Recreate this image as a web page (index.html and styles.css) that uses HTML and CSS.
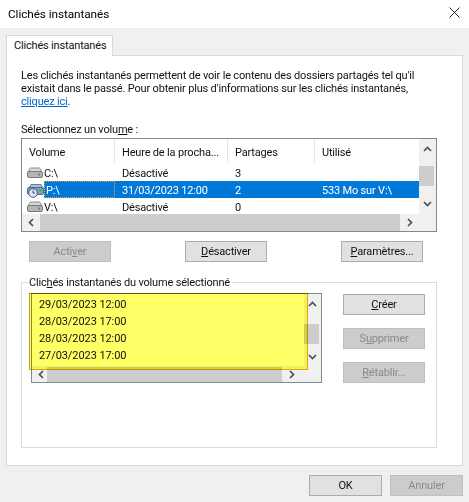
FILE: index.html
```html
<!DOCTYPE html>
<html lang="fr">
<head>
<meta charset="utf-8">
<title>Clichés instantanés</title>
<link rel="stylesheet" href="styles.css">
</head>
<body>
<svg class="defs" width="0" height="0" aria-hidden="true">
  <defs>
    <symbol id="up" viewBox="0 0 9 6"><path d="M1 5 L4.5 1.5 L8 5" fill="none" stroke="#505050" stroke-width="1.7"/></symbol>
    <symbol id="down" viewBox="0 0 9 6"><path d="M1 1 L4.5 4.5 L8 1" fill="none" stroke="#505050" stroke-width="1.7"/></symbol>
    <symbol id="left" viewBox="0 0 6 9"><path d="M5 1 L1.5 4.5 L5 8" fill="none" stroke="#505050" stroke-width="1.7"/></symbol>
    <symbol id="right" viewBox="0 0 6 9"><path d="M1 1 L4.5 4.5 L1 8" fill="none" stroke="#505050" stroke-width="1.7"/></symbol>
    <symbol id="drive" viewBox="0 0 16 11">
      <path d="M1 5 L3 1.5 Q3.4 1 4 1 H12 Q12.6 1 13 1.5 L15 5 Z" fill="#d8d8d8" stroke="#8a8a8a"/>
      <rect x="0.5" y="4.5" width="15" height="6" rx="1.5" fill="#b4b4b4" stroke="#7a7a7a"/>
      <rect x="11" y="6.5" width="2" height="2" fill="#3fae3f"/>
    </symbol>
  </defs>
</svg>
<header class="titlebar">
  <span class="title">Clichés instantanés</span>
  <svg class="close" viewBox="0 0 11 11" width="11" height="11"><path d="M0.5 0.5 L10.5 10.5 M10.5 0.5 L0.5 10.5" stroke="#222" stroke-width="1" fill="none"/></svg>
</header>
<nav class="tabs"><div class="tab">Clichés instantanés</div></nav>
<main class="panel">
  <p class="intro">Les clichés instantanés permettent de voir le contenu des dossiers partagés tel qu'il<br>existait dans le passé. Pour obtenir plus d'informations sur les clichés instantanés,<br><a class="link" href="#">cliquez ici</a>.</p>
  <label class="vol-label">Sélectionnez un volu<u>m</u>e :</label>
  <section class="listview">
    <div class="lv-main">
      <div class="lv-content">
        <div class="lv-head">
          <span class="col">Volume</span><span class="col">Heure de la procha...</span><span class="col">Partages</span><span class="col">Utilisé</span>
        </div>
        <div class="lv-row">
          <span class="cell-vol"><svg class="drive"><use href="#drive"/></svg><span>C:\</span></span><span>Désactivé</span><span>3</span><span></span>
        </div>
        <div class="lv-row selected">
          <span class="cell-vol"><svg class="drive-clock" viewBox="0 0 17 15" width="17" height="15">
            <path d="M2 5 L4 1.5 H14 L16 5 Z" fill="#a9bfd6" stroke="#5f7f9f"/>
            <rect x="0.5" y="4.5" width="16" height="7" rx="1.5" fill="#7f9cbd" stroke="#4f6f92"/>
            <rect x="12.500" y="7" width="2" height="2" fill="#4ab04a"/>
            <circle cx="6" cy="10" r="4.300" fill="#dfe8f2" stroke="#3f5f82"/>
            <path d="M6 7.500 V10 H8" fill="none" stroke="#2f4f72"/>
          </svg><span class="sel-text">P:\</span></span><span>31/03/2023 12:00</span><span>2</span><span>533 Mo sur V:\</span>
        </div>
        <div class="lv-row clip">
          <span class="cell-vol"><svg class="drive"><use href="#drive"/></svg><span>V:\</span></span><span>Désactivé</span><span>0</span><span></span>
        </div>
      </div>
      <div class="vscroll">
        <svg class="chev-v"><use href="#up"/></svg>
        <div class="vtrack top1"><div class="vthumb"></div></div>
        <svg class="chev-v"><use href="#down"/></svg>
      </div>
    </div>
    <div class="hscroll">
      <svg class="chev-h"><use href="#left"/></svg>
      <div class="hthumb"></div>
      <svg class="chev-h"><use href="#right"/></svg>
    </div>
  </section>
  <div class="vol-actions">
    <button class="btn" disabled>Acti<u>v</u>er</button>
    <button class="btn"><u>D</u>ésactiver</button>
    <button class="btn"><u>P</u>aramètres...</button>
  </div>
  <fieldset class="group">
    <legend class="group-title">Clic<u>h</u>és instantanés du volume sélectionné</legend>
    <div class="group-body">
      <div class="snaplist">
        <div class="snap-main">
          <ul class="snaps">
            <li>29/03/2023 12:00</li>
            <li>28/03/2023 17:00</li>
            <li>28/03/2023 12:00</li>
            <li>27/03/2023 17:00</li>
          </ul>
          <div class="vscroll small">
            <svg class="chev-v"><use href="#up"/></svg>
            <div class="vtrack top2"><div class="vthumb"></div></div>
            <svg class="chev-v"><use href="#down"/></svg>
          </div>
        </div>
        <div class="hscroll small">
          <svg class="chev-h"><use href="#left"/></svg>
          <div class="hthumb"></div>
          <svg class="chev-h"><use href="#right"/></svg>
        </div>
      </div>
      <div class="snap-actions">
        <button class="btn"><u>C</u>réer</button>
        <button class="btn" disabled>S<u>u</u>pprimer</button>
        <button class="btn" disabled><u>R</u>établir...</button>
      </div>
    </div>
  </fieldset>
</main>
<footer class="footer">
  <button class="btn wide">OK</button>
  <button class="btn wide" disabled>Annuler</button>
</footer>
<div class="highlight"></div>
</body>
</html>
```
FILE: styles.css
```css
* { box-sizing: border-box; }
html, body { margin: 0; padding: 0; }
body {
  width: 469px;
  height: 502px;
  position: relative;
  overflow: hidden;
  background: #f0f0f0;
  color: #111;
  font-family: Roboto, "Liberation Sans", sans-serif;
  font-size: 11px;
  letter-spacing: -0.18px;
  line-height: 13px;
}
.defs { position: absolute; }
u { text-underline-offset: 1px; text-decoration-thickness: 1px; }

.titlebar {
  height: 28px;
  background: #fff;
  display: flex;
  align-items: center;
  justify-content: space-between;
  padding: 0 9px 0 8px;
}
.title { font-size: 11.8px; letter-spacing: -0.08px; color: #000; }
.close { display: block; margin-bottom: 4px; }

.tabs { height: 27px; padding: 7px 0 0 6px; }
.tab {
  width: 107px;
  height: 21px;
  background: #fff;
  border: 1px solid #d9d9d9;
  border-bottom: none;
  padding: 3px 0 0 7px;
  position: relative;
  z-index: 1;
  white-space: nowrap;
}
.panel {
  width: 457px;
  height: 411px;
  margin-left: 6px;
  background: #fff;
  border: 1px solid #d9d9d9;
  padding: 13px 0 0 14px;
}
.intro { margin: 0; width: 430px; white-space: nowrap; }
.link { color: #0066cc; }
.vol-label { display: block; margin-top: 15px; height: 15px; }

.listview {
  width: 416px;
  height: 94px;
  border: 1px solid #828790;
  display: flex;
  flex-direction: column;
}
.lv-main { display: flex; height: 75px; }
.lv-content { width: 397px; overflow: hidden; }
.lv-head, .lv-row {
  display: grid;
  grid-template-columns: 93px 113px 87px 1fr;
  white-space: nowrap;
}
.lv-head { height: 25px; }
.col {
  height: 24px;
  padding: 7px 0 0 7px;
  border-right: 1px solid #e5e5e5;
}
.col:last-child { border-right: none; }
.lv-row { height: 17px; line-height: 15px; }
.lv-row > span { padding: 2px 0 0 7px; }
.lv-row > .cell-vol { padding: 0 0 0 5px; display: flex; align-items: center; }
.drive { width: 16px; height: 11px; margin-right: 1px; flex: none; }
.drive-clock { flex: none; margin-top: 2px; }
.cell-vol > span { padding-top: 2px; }
.selected > span { background: #0078d7; color: #fff; }
.selected > .cell-vol { background: none; color: #111; }
.sel-text {
  background: #0078d7;
  color: #fff;
  flex: 1;
  height: 17px;
  padding-left: 2px;
  outline: 1px dotted #e8a33c;
  outline-offset: -1px;
}
.clip { height: 16px; overflow: hidden; }

.vscroll {
  width: 17px;
  background: #f0f0f0;
  display: flex;
  flex-direction: column;
  align-items: center;
  justify-content: space-between;
  padding: 7px 0 7px;
}
.chev-v { width: 9px; height: 6px; display: block; flex: none; }
.vtrack { flex: 1; width: 100%; }
.top1 { padding-top: 14px; }
.top2 { padding-top: 17px; }
.vthumb { width: 15px; height: 20px; background: #cdcdcd; }
.hscroll {
  height: 17px;
  background: #f0f0f0;
  display: flex;
  align-items: center;
  padding-left: 6px;
}
.chev-h { width: 6px; height: 9px; flex: none; display: block; }
.hthumb { width: 360px; height: 17px; background: #cdcdcd; margin: 0 7px 0 6px; }

.vol-actions {
  display: flex;
  justify-content: space-between;
  width: 394px;
  margin: 9px 0 0 8px;
}
.btn {
  width: 82px;
  height: 21px;
  padding: 0;
  border: 1px solid #adadad;
  background: #e1e1e1;
  color: #111;
  font: inherit;
  letter-spacing: inherit;
  line-height: 17px;
}
.btn:disabled { background: #cccccc; border-color: #bfbfbf; color: #8a8a8a; }

.group {
  width: 416px;
  height: 172px;
  margin: 14px 0 0;
  padding: 0;
  border: 1px solid #dcdcdc;
  min-width: 0;
}
.group-title { margin-left: 6px; padding: 0 1px; line-height: 13px; }
.group-body { display: flex; align-items: flex-start; padding: 4px 0 0 9px; }
.snaplist {
  width: 291px;
  height: 90px;
  border: 1px solid #828790;
  display: flex;
  flex-direction: column;
}
.snap-main { display: flex; height: 72px; }
.snaps { list-style: none; margin: 0; padding: 2px 0 0 7px; flex: 1; letter-spacing: -0.08px; }
.snaps li { height: 17px; line-height: 17px; }
.vscroll.small { width: 17px; padding: 7px 0 6px; }
.hscroll.small { height: 16px; padding-left: 6px; }
.hscroll.small .hthumb { width: 235px; height: 15px; margin: 0 7px 0 3px; }
.snap-actions {
  display: flex;
  flex-direction: column;
  gap: 13px;
  margin-left: 21px;
  padding-top: 1px;
}

.footer {
  display: flex;
  justify-content: flex-end;
  gap: 8px;
  padding: 9px 6px 0 0;
}
.btn.wide { width: 73px; }

.highlight {
  position: absolute;
  left: 29px;
  top: 293px;
  width: 279px;
  height: 77px;
  background: #ffff66;
  border: 1px solid #f0b400;
  border-top-color: #c89a10;
  border-left-color: #c89a10;
  mix-blend-mode: multiply;
}
```
